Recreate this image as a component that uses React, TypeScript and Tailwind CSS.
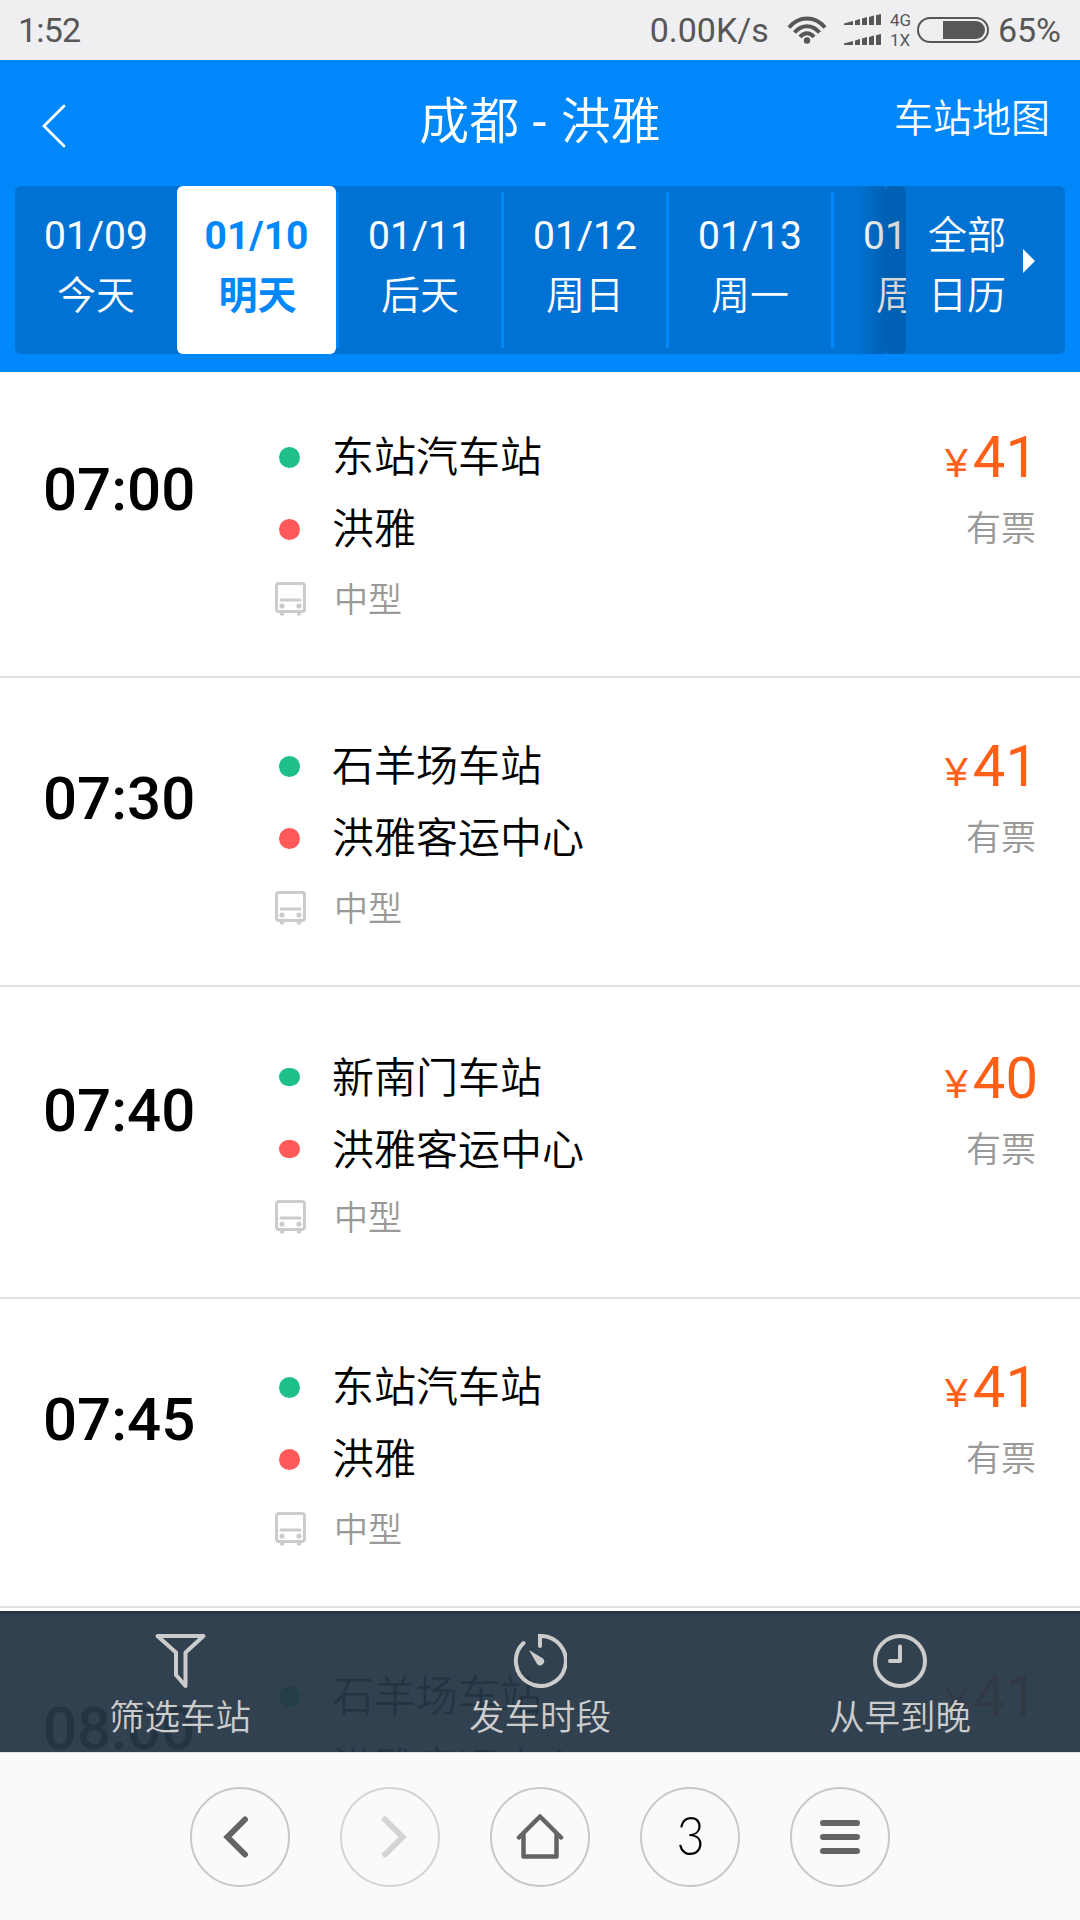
const days = [
  { date: "01/09", label: "今天" },
  { date: "01/10", label: "明天", active: true },
  { date: "01/11", label: "后天" },
  { date: "01/12", label: "周日" },
  { date: "01/13", label: "周一" },
  { date: "01/14", label: "周二" },
];

type Trip = { time: string; from: string; to: string; price: number; tall?: boolean };

const trips: Trip[] = [
  { time: "07:00", from: "东站汽车站", to: "洪雅", price: 41 },
  { time: "07:30", from: "石羊场车站", to: "洪雅客运中心", price: 41 },
  { time: "07:40", from: "新南门车站", to: "洪雅客运中心", price: 40, tall: true },
  { time: "07:45", from: "东站汽车站", to: "洪雅", price: 41 },
  { time: "08:00", from: "石羊场车站", to: "洪雅客运中心", price: 41 },
];

function Signal() {
  return (
    <svg width="38" height="12" viewBox="0 0 38 12" fill="#575757">
      <path d="M0 9.5L9 7V11H0Z" />
      <path d="M11 6.5L16 5V11H11Z" />
      <path d="M18 4.5L23 3V11H18Z" />
      <path d="M25 3L30 1.5V11H25Z" />
      <path d="M32 1.2L37 0V11H32Z" />
    </svg>
  );
}

function StatusBar() {
  return (
    <div className="flex h-[60px] items-center justify-between bg-[#efeff1] pl-[18px] pr-[19px] text-[#575757]">
      <span className="text-[34px] leading-[60px] tracking-[-0.8px]">1:52</span>
      <div className="flex items-center">
        <span className="text-[34px] leading-[60px]">0.00K/s</span>
        <svg className="ml-[18px]" width="40" height="28" viewBox="0 0 40 28" fill="none">
          <g stroke="#575757" strokeWidth="4">
            <path d="M2 11.5C12 -0.5 28 -0.5 38 11.5" />
            <path d="M7.5 16.5C14.5 8 25.5 8 32.5 16.5" />
            <path d="M13 21C17 16 23 16 27 21" />
          </g>
          <circle cx="20" cy="24.5" r="3.2" fill="#575757" />
        </svg>
        <div className="ml-[17px] flex flex-col gap-2">
          <Signal />
          <Signal />
        </div>
        <div className="ml-[8px] flex w-[24px] flex-col text-[17px] leading-[20px]">
          <span>4G</span>
          <span>1X</span>
        </div>
        <div className="ml-[3px] flex h-[26px] w-[72px] justify-end rounded-full border-2 border-[#575757] p-[2px]">
          <div className="w-[42px] rounded-r-full bg-[#575757]" />
        </div>
        <span className="ml-[9px] text-[34px] leading-[60px]">65%</span>
      </div>
    </div>
  );
}

function Header() {
  return (
    <header className="h-[312px] bg-[#0087fa] text-white">
      <div className="grid h-[126px] grid-cols-3 items-start">
        <svg className="ml-[41px] mt-[44px]" width="25" height="44" viewBox="0 0 25 44" fill="none">
          <path d="M23 2L3 22L23 42" stroke="currentColor" strokeWidth="2.8" strokeLinecap="round" />
        </svg>
        <h1 className="mt-[26px] whitespace-pre text-center text-[50px] font-[350] leading-[72px]">
          成都<span className="font-normal tracking-[1px]"> - </span>洪雅
        </h1>
        <span className="mt-[29px] pr-[30px] text-right text-[39px] font-[350] leading-[60px]">车站地图</span>
      </div>
      <div className="mx-[15px] flex h-[168px]">
        <div className="relative flex w-[891px] shrink-0 overflow-hidden rounded-[6px] bg-black/15">
          {days.map((d, i) => (
            <div key={d.date} className="flex shrink-0 items-center">
              {i > 1 && <div className="h-[156px] w-[3px] bg-[#0087fa]" />}
              <div
                className={
                  d.active
                    ? "flex h-[168px] w-[159px] flex-col items-center rounded-[6px] bg-white pt-[20px] text-[#0087fa]"
                    : "flex h-[168px] w-[162px] flex-col items-center pt-[20px]"
                }
              >
                <span className={d.active ? "text-[39px] font-bold leading-[60px]" : "text-[39px] leading-[60px]"}>
                  {d.date}
                </span>
                <span
                  className={
                    d.active
                      ? "pl-[2px] text-[39px] font-bold leading-[60px]"
                      : "text-[39px] font-[350] leading-[60px]"
                  }
                >
                  {d.label}
                </span>
              </div>
            </div>
          ))}
          <div className="absolute inset-y-0 right-[21px] w-[30px] bg-linear-to-r from-black/0 to-black/15" />
        </div>
        <div className="relative -ml-[21px] flex w-[180px] items-start rounded-[6px] bg-black/15 pl-[43px]">
          <div className="mt-[20px] flex flex-col text-[39px] font-[350] leading-[60px]">
            <span>全部</span>
            <span>日历</span>
          </div>
          <svg className="ml-[17px] mt-[63px]" width="12" height="24" viewBox="0 0 12 24" fill="currentColor">
            <path d="M0 0L12 12L0 24Z" />
          </svg>
        </div>
      </div>
    </header>
  );
}

function BusIcon() {
  return (
    <svg className="mr-[28px]" width="31" height="34" viewBox="0 0 31 34" fill="none">
      <rect x="1.5" y="1.5" width="28" height="28" rx="2.5" stroke="#ccc" strokeWidth="3" />
      <path d="M6 18H25" stroke="#ccc" strokeWidth="3" strokeLinecap="round" />
      <circle cx="7" cy="24" r="2.6" fill="#ccc" />
      <circle cx="24" cy="24" r="2.6" fill="#ccc" />
      <path d="M7 30V31.5M24 30V31.5" stroke="#ccc" strokeWidth="4.5" strokeLinecap="round" />
    </svg>
  );
}

function Stop({ name, color, tall }: { name: string; color: string; tall?: boolean }) {
  return (
    <div className="flex h-[72px] items-center font-[350]">
      <i className={`mr-[32px] w-[21px] rounded-full ${tall ? "mb-[2px] h-[18px]" : "h-[21px]"} ${color}`} />
      <span className="pt-[2px] text-[42px] leading-[72px]">{name}</span>
    </div>
  );
}

function TripRow({ trip, first }: { trip: Trip; first: boolean }) {
  return (
    <li
      className={
        first
          ? "flex h-[306px] shrink-0 border-b-2 border-[#e2e2e2] pt-[49px]"
          : trip.tall
            ? "flex h-[312px] shrink-0 border-b-2 border-[#e2e2e2] pt-[55px]"
            : "flex h-[309px] shrink-0 border-b-2 border-[#e2e2e2] pt-[52px]"
      }
    >
      <div className="w-[279px] shrink-0 pl-[43px] pt-[34px] text-[60px] font-medium leading-[70px]">{trip.time}</div>
      <div className="flex-1">
        <Stop name={trip.from} color="bg-[#1fc088]" tall={trip.tall} />
        <Stop name={trip.to} color="bg-[#ff5959]" tall={trip.tall} />
        <div className={trip.tall ? "-ml-[4px] flex h-[62px] items-center" : "-ml-[4px] flex h-[68px] items-center"}>
          <BusIcon />
          <span className="pt-[2px] text-[34px] font-[350] leading-[60px] text-[#999]">中型</span>
        </div>
      </div>
      <div className="flex flex-col pr-[42px]">
        <div className="flex h-[72px] items-baseline text-[#ff5f16]">
          <span className="mr-[5px] font-['Liberation_Sans'] text-[41px] leading-[72px]">¥</span>
          <span className="text-[58px] leading-[72px]">{trip.price}</span>
        </div>
        <span className="mr-[2px] pt-px text-right text-[35px] font-[350] leading-[72px] text-[#999]">有票</span>
      </div>
    </li>
  );
}

function FilterBar() {
  return (
    <div className="absolute inset-x-0 bottom-0 grid h-[141px] grid-cols-3 border-t-3 border-[#283543] bg-[#263747]/95 text-[35.5px] font-[350] leading-[52px] text-[#ccc]">
      <div className="flex flex-col items-center pt-[20px]">
        <svg width="52" height="54" viewBox="0 0 52 54" fill="none" stroke="#ccc" strokeWidth="4" strokeLinejoin="round">
          <path d="M3.5 2H49.5L31.5 18.5V52L22 41V18.5Z" />
        </svg>
        <span className="mt-[4px]">筛选车站</span>
      </div>
      <div className="flex flex-col items-center pt-[20px]">
        <svg width="54" height="54" viewBox="0 0 54 54" fill="none" stroke="#ccc" strokeWidth="4" strokeLinecap="round">
          <path d="M10.5 9A25 25 0 1 0 27 2V12" />
          <path d="M16 16L30 24.5A3.5 3.5 0 0 1 24 30Z" fill="#ccc" stroke="none" />
        </svg>
        <span className="mt-[4px]">发车时段</span>
      </div>
      <div className="flex flex-col items-center pt-[20px]">
        <svg width="54" height="54" viewBox="0 0 54 54" fill="none" stroke="#ccc" strokeWidth="4" strokeLinecap="round">
          <circle cx="27" cy="27" r="25" />
          <path d="M27 12.5V27H17" strokeLinejoin="round" />
        </svg>
        <span className="mt-[4px]">从早到晚</span>
      </div>
    </div>
  );
}

const circle = "flex size-[100px] items-center justify-center rounded-full border-2 border-[#c8c8c8]";

function BrowserBar() {
  return (
    <nav className="flex h-[168px] items-center justify-center gap-[50px] border-t border-[#e4e4e4] bg-[#fafafa] text-[#646464]">
      <button className={circle}>
        <svg className="mr-[9px]" width="26" height="42" viewBox="0 0 26 42" fill="none">
          <path d="M22 3.5L4.5 21L22 38.5" stroke="currentColor" strokeWidth="6" strokeLinecap="round" />
        </svg>
      </button>
      <button className="flex size-[100px] items-center justify-center rounded-full border-2 border-[#d4d4d4] text-[#d4d4d4]">
        <svg className="ml-[7px]" width="26" height="42" viewBox="0 0 26 42" fill="none">
          <path d="M4 3.5L21.5 21L4 38.5" stroke="currentColor" strokeWidth="6" strokeLinecap="round" />
        </svg>
      </button>
      <button className={circle}>
        <svg width="48" height="46" viewBox="0 0 48 46" fill="none" stroke="currentColor" strokeWidth="4.5" strokeLinecap="round" strokeLinejoin="round">
          <path d="M3 23.5L24 2.5L45 23.5" />
          <path d="M7.5 21V42.5H40.5V21" />
        </svg>
      </button>
      <button className={circle}>
        <span className="mb-[4px] ml-[2px] scale-x-90 font-[Lato] text-[54px] font-light leading-[60px] text-black">3</span>
      </button>
      <button className={circle}>
        <svg width="40" height="36" viewBox="0 0 40 36" stroke="currentColor" strokeWidth="6" strokeLinecap="round">
          <path d="M3 4H37M3 18H37M3 32H37" />
        </svg>
      </button>
    </nav>
  );
}

export default function App() {
  return (
    <div className="flex h-[1920px] w-[1080px] flex-col overflow-hidden bg-white font-[Roboto,'Noto_Sans_CJK_SC',sans-serif] text-black">
      <StatusBar />
      <Header />
      <main className="relative h-[1380px] shrink-0 overflow-hidden">
        <ul>
          {trips.map((t, i) => (
            <TripRow key={t.time} trip={t} first={i === 0} />
          ))}
        </ul>
        <FilterBar />
      </main>
      <BrowserBar />
    </div>
  );
}
